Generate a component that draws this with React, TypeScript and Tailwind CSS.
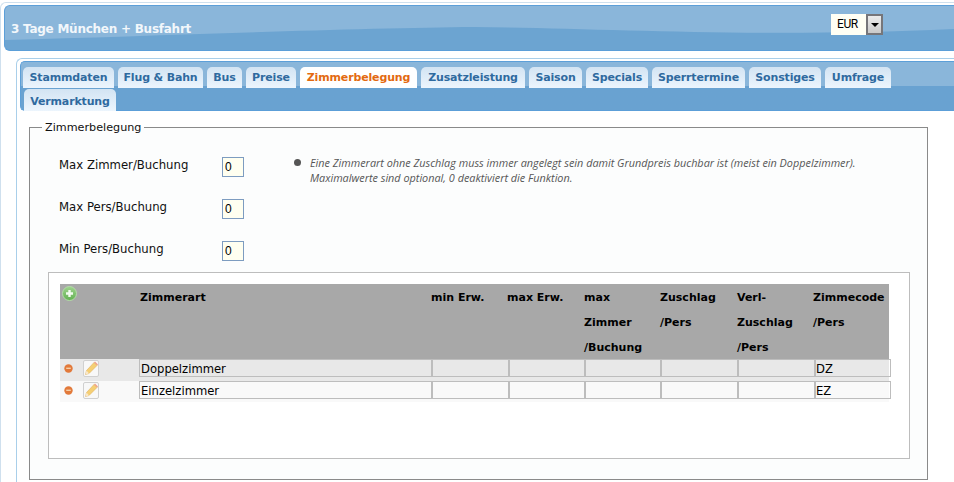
import React from "react";

const sans = "font-['DejaVu_Sans','Liberation_Sans',sans-serif]";

const tabsRowOne = [
  { label: "Stammdaten", width: "w-[91px]" },
  { label: "Flug & Bahn", width: "w-[85px]" },
  { label: "Bus", width: "w-[35px]" },
  { label: "Preise", width: "w-[50px]" },
  { label: "Zimmerbelegung", width: "w-[117px]" },
  { label: "Zusatzleistung", width: "w-[104px]" },
  { label: "Saison", width: "w-[53px]" },
  { label: "Specials", width: "w-[62px]" },
  { label: "Sperrtermine", width: "w-[93px]" },
  { label: "Sonstiges", width: "w-[72px]" },
  { label: "Umfrage", width: "w-[66px]" },
];

const limits = ["Max Zimmer/Buchung", "Max Pers/Buchung", "Min Pers/Buchung"];

const headColumns = "grid grid-cols-[79px_292px_76px_77px_76px_77px_76px_76px]";
const rowColumns = "grid grid-cols-[79px_293px_77px_76px_76px_77px_77px_74px]";

function Wave() {
  return (
    <svg className="absolute inset-0 h-full w-full" viewBox="0 0 950 44" preserveAspectRatio="none">
      <path d="M0 34 C150 30 350 22 470 21 C600 22 750 32 950 23 L950 0 L0 0 Z" fill="#8ab6da" />
    </svg>
  );
}

function Tab({ label, width, active }: { label: string; width: string; active?: boolean }) {
  return (
    <div
      className={
        active
          ? `${width} h-[21px] rounded-t-[5px] bg-white pt-[3px] text-center text-[11px] leading-[15px] font-bold tracking-[-0.15px] text-[#e36a10]`
          : `${width} h-[21px] rounded-t-[5px] bg-gradient-to-b from-[#d3e4f3] to-[#ecf5fd] pt-[3px] text-center text-[11px] leading-[15px] font-bold tracking-[-0.15px] text-[#2f6a9f]`
      }
    >
      {label}
    </div>
  );
}

function AddIcon() {
  return (
    <svg width="15" height="15" viewBox="0 0 15 15">
      <defs>
        <linearGradient id="addFill" x1="0" y1="0" x2="0" y2="1">
          <stop offset="0" stopColor="#9fd48e" />
          <stop offset="1" stopColor="#62b052" />
        </linearGradient>
      </defs>
      <circle cx="7.5" cy="7.5" r="7" fill="url(#addFill)" stroke="#b5dba9" />
      <path d="M7.5 4v7M4 7.5h7" stroke="#f2fbef" strokeWidth="2.4" />
    </svg>
  );
}

function RemoveIcon() {
  return (
    <svg width="9" height="9" viewBox="0 0 9 9">
      <circle cx="4.5" cy="4.5" r="4.2" fill="#e2793a" />
      <path d="M2.2 4.3h4.6" stroke="#f6cfa6" strokeWidth="1.4" />
    </svg>
  );
}

function EditIcon() {
  return (
    <div className="flex h-[17px] w-[16px] items-center justify-center rounded-[2px] border border-[#d0d0d0] bg-[#f8f8f8]">
      <svg width="14" height="15" viewBox="0 0 14 15" className="shrink-0">
        <path d="M2.5 9.5 L10 1.5 L13 4.5 L5 12.5 L1.5 13.5 Z" fill="#f5cf74" stroke="#e0b05a" strokeWidth="0.6" />
        <path d="M10 1.5 L11 0.5 L14 3.5 L13 4.5 Z" fill="#ee9f88" />
        <path d="M1.5 13.5 L2.5 9.5 L5 12.5 Z" fill="#f8e8cc" />
      </svg>
    </div>
  );
}

function Row({ name, code, shade, height }: { name: string; code: string; shade: string; height: string }) {
  const cell = "h-[18px] border border-[#bdbdbd] bg-transparent";
  return (
    <div className={`${rowColumns} ${shade} ${height} w-[829px] items-start`}>
      <div className="flex items-center gap-[10px] pt-px pl-[4px]">
        <RemoveIcon />
        <EditIcon />
      </div>
      <div className={`${cell} pl-px text-[11.6px] leading-[18px] text-black`}>{name}</div>
      <div className={cell} />
      <div className={cell} />
      <div className={cell} />
      <div className={cell} />
      <div className={cell} />
      <div className={`${cell} w-[76px] text-[11.6px] leading-[18px] text-black`}>{code}</div>
    </div>
  );
}

export default function App() {
  const head = "pt-px text-[11px] leading-[25px] font-bold text-black";
  return (
    <div className={`${sans} h-[482px] w-[954px] overflow-hidden bg-white`}>
      <div className="mt-[2px] h-[480px] rounded-tl-[6px] border-t border-l border-[#cfe0ee] pt-[2px] pl-[3px]">
        {/* Booking title bar */}
        <div className="relative flex h-[46px] items-start justify-between overflow-hidden rounded-l-[6px] border border-r-0 border-[#5c9fd8] bg-[#6ca4d1]">
          <Wave />
          <h1 className="relative pt-[16px] pl-[6px] text-[12px] leading-[15px] font-bold tracking-[-0.25px] text-[#f2f7fb]">
            3 Tage München + Busfahrt
          </h1>
          <div className="relative mt-[8px] mr-[71px] flex h-[21px] w-[52px] bg-[#fffff4]">
            <span className="flex-1 pl-[6px] font-['Roboto',sans-serif] text-[12px] leading-[21px] tracking-[-0.4px] text-black">
              EUR
            </span>
            <div className="flex h-[21px] w-[17px] items-center justify-center border-2 border-[#76767a] bg-gradient-to-b from-[#ececec] to-[#c9c9c9]">
              <div className="h-0 w-0 border-x-[4px] border-t-[4px] border-x-transparent border-t-black" />
            </div>
          </div>
        </div>

        {/* Offer editor */}
        <div className="mt-[7px] ml-[12px] h-[430px] rounded-tl-[6px] border-t border-l border-[#a9cfea] pt-[2px] pl-[3px]">
          <div className="flex h-[50px] flex-wrap content-start gap-x-[4px] rounded-l-[5px] border border-r-0 border-[#5c9fd8] bg-gradient-to-b from-[#8ab6da] from-50% to-[#69a2d1] to-50% pt-[5px] pl-[2px]">
            {tabsRowOne.map((t) => (
              <Tab key={t.label} label={t.label} width={t.width} active={t.label === "Zimmerbelegung"} />
            ))}
            <div className="mt-px ml-px">
              <div className="h-[22px] w-[92px] rounded-t-[5px] bg-gradient-to-b from-[#d3e4f3] to-[#ecf5fd] pt-[5px] text-center text-[11px] leading-[15px] font-bold tracking-[-0.15px] text-[#2f6a9f]">
                Vermarktung
              </div>
            </div>
          </div>

          <fieldset className="mt-[9px] ml-[9px] h-[360px] w-[899px] border border-[#8a8a8a] bg-[#fcfdfd] pt-[2px]">
            <legend className="ml-[12px] px-[3px] text-[11.2px] leading-[15px] text-[#111]">Zimmerbelegung</legend>
            <div className="pl-[18px]">
              <div className="flex pt-[18px]">
                <div className="w-[245px] pl-[11px]">
                  {limits.map((label) => (
                    <div key={label} className="flex h-[42px] items-start">
                      <span className="mt-[3px] w-[163px] text-[11.7px] leading-[15px] text-[#111]">{label}</span>
                      <div className="mt-[2px] h-[20px] w-[22px] border border-[#7d9cc0] bg-[#fffff0] pl-[2px] font-['Liberation_Sans',sans-serif] text-[12px] leading-[19px] text-black">
                        0
                      </div>
                    </div>
                  ))}
                </div>
                <div className="flex gap-[9px] pl-[1px]">
                  <div className="mt-[4px] h-[7px] w-[7px] shrink-0 rounded-full bg-[#555]" />
                  <p className="font-['Open_Sans',sans-serif] text-[10.85px] leading-[15px] text-[#555] italic">
                    Eine Zimmerart ohne Zuschlag muss immer angelegt sein damit Grundpreis buchbar ist (meist ein Doppelzimmer).
                    <br />
                    Maximalwerte sind optional, 0 deaktiviert die Funktion.
                  </p>
                </div>
              </div>

              {/* Room types */}
              <div className="mt-[-9px] h-[187px] w-[862px] border border-[#bdbdbd] bg-white pt-[11px] pl-[11px]">
                <div className={`${headColumns} h-[75px] w-[829px] bg-[#a8a8a8]`}>
                  <div className="pt-[2px] pl-[2px]">
                    <AddIcon />
                  </div>
                  <div className={`${head} pl-px`}>Zimmerart</div>
                  <div className={head}>min Erw.</div>
                  <div className={head}>max Erw.</div>
                  <div className={head}>max<br />Zimmer<br />/Buchung</div>
                  <div className={head}>Zuschlag<br />/Pers</div>
                  <div className={head}>Verl-<br />Zuschlag<br />/Pers</div>
                  <div className={head}>Zimmecode<br />/Pers</div>
                </div>
                <Row name="Doppelzimmer" code="DZ" shade="bg-[#e8e8e8]" height="h-[22px]" />
                <Row name="Einzelzimmer" code="EZ" shade="bg-[#f9f9f9]" height="h-[21px]" />
              </div>
            </div>
          </fieldset>
        </div>
      </div>
    </div>
  );
}
